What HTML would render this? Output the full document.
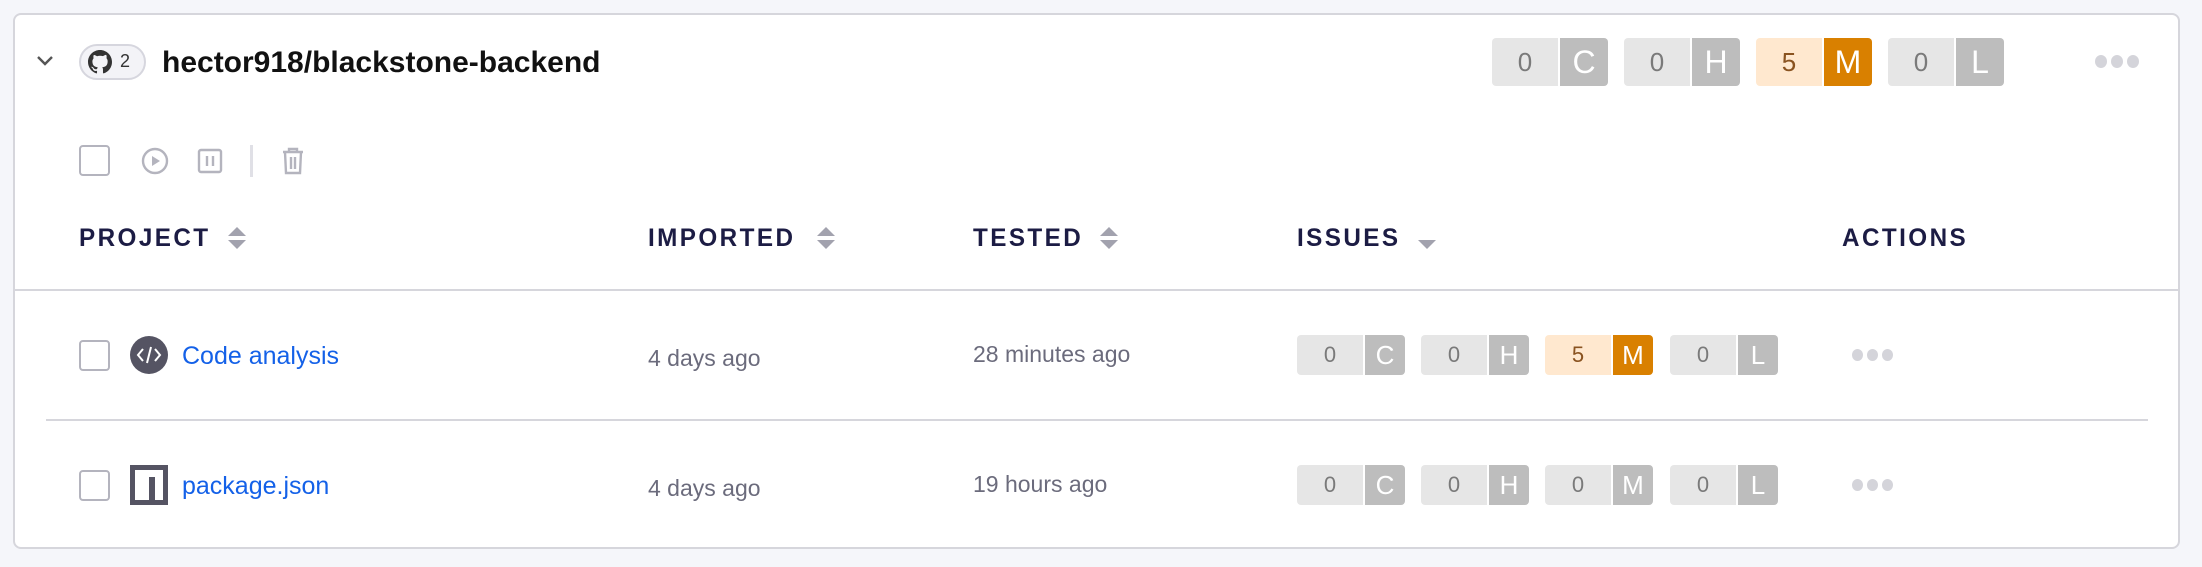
<!DOCTYPE html>
<html><head><meta charset="utf-8"><style>
*{box-sizing:border-box;margin:0;padding:0}
body{width:2202px;height:567px;background:#f5f6fa;font-family:"Liberation Sans",sans-serif;position:relative;overflow:hidden}
.card{position:absolute;left:13px;top:13px;width:2167px;height:536px;background:#fff;border:2px solid #d6d6dc;border-radius:8px}
.a{position:absolute}
.th{position:absolute;top:224px;font-size:25px;letter-spacing:2.5px;color:#1c1c44;font-weight:bold;transform:scaleX(0.97);transform-origin:left}
.sort{position:absolute;width:0;height:0;border-left:9px solid transparent;border-right:9px solid transparent}
.cb{position:absolute;width:31px;height:31px;border:2px solid #b4b4be;border-radius:4px;background:#fff}
.b{position:absolute;display:flex;border-radius:4px;overflow:hidden}
.b span{display:flex;align-items:center;justify-content:center;color:#fff}
.b .n{background:#e6e6e6;color:#7a7a7a;margin-right:2px}
.b .l{background:#bdbdbd}
.b.m .n{background:#ffe8cf;color:#8a5320}
.b.m .l{background:#d98000}
.hb{height:48px;font-size:26px}.hb .n{width:66px}.hb .l{width:48px;font-size:32px}
.rb{height:40px;font-size:22px}.rb .n{width:66px}.rb .l{width:40px;font-size:26px}
.dots{position:absolute;display:flex;gap:4px}
.dots i{display:block;border-radius:50%;background:#d4d4da}
.link{position:absolute;font-size:25px;color:#1461e8}
.date{position:absolute;font-size:23px;color:#6b6b7c}
</style></head><body>
<div class="card"></div>
<svg class="a" style="left:36px;top:54px" width="18" height="14" viewBox="0 0 18 14"><path d="M2 3l7 7 7-7" fill="none" stroke="#555" stroke-width="2.4"/></svg>
<div class="a" style="left:79px;top:44px;width:67px;height:36px;border:2px solid #d6d6de;border-radius:18px;background:#f3f3f7"></div>
<svg class="a" style="left:88px;top:50px" width="24" height="24" viewBox="0 0 16 16"><path fill="#333" d="M8 0C3.58 0 0 3.58 0 8c0 3.54 2.29 6.53 5.470 7.59.4.07.55-.17.55-.38v-1.34C3.8 14.35 3.33 12.8 3.33 12.8c-.36-.92-.89-1.170-.89-1.17-.73-.5.06-.49.06-.49.8.06 1.23.83 1.23.83.71 1.22 1.87.87 2.33.66.07-.52.28-.87.51-1.07-1.78-.2-3.64-.89-3.64-3.95 0-.87.31-1.59.82-2.15-.08-.2-.36-1.02.08-2.12 0 0 .67-.21 2.2.82A7.6 7.6 0 018 3.85c.68 0 1.36.09 2 .27 1.53-1.04 2.2-.82 2.2-.82.44 1.1.16 1.92.08 2.12.51.56.82 1.27.82 2.15 0 3.07-1.87 3.75-3.65 3.95.29.25.54.73.54 1.48v2.2c0 .21.15.46.55.38A8 8 0 0016 8c0-4.42-3.58-8-8-8z"/></svg>
<div class="a" style="left:120px;top:51px;font-size:18px;color:#333">2</div>
<div class="a" style="left:162px;top:46px;font-size:30px;color:#111;font-weight:bold">hector918/blackstone-backend</div>
<div class="b hb" style="left:1492px;top:38px"><span class="n">0</span><span class="l">C</span></div>
<div class="b hb" style="left:1624px;top:38px"><span class="n">0</span><span class="l">H</span></div>
<div class="b hb m" style="left:1756px;top:38px"><span class="n">5</span><span class="l">M</span></div>
<div class="b hb" style="left:1888px;top:38px"><span class="n">0</span><span class="l">L</span></div>
<div class="dots" style="left:2095px;top:55px"><i style="width:12px;height:13px"></i><i style="width:12px;height:13px"></i><i style="width:12px;height:13px"></i></div>
<div class="cb" style="left:79px;top:145px"></div>
<svg class="a" style="left:140px;top:146px" width="30" height="30" viewBox="0 0 30 30"><circle cx="15" cy="15" r="12" fill="none" stroke="#b4b4be" stroke-width="2.4"/><path d="M12 10v10l8-5z" fill="#b4b4be"/></svg>
<svg class="a" style="left:197px;top:148px" width="26" height="26" viewBox="0 0 26 26"><rect x="2" y="2" width="22" height="22" rx="2" fill="none" stroke="#b4b4be" stroke-width="2.4"/><path d="M10 8v10M16 8v10" stroke="#b4b4be" stroke-width="2.4"/></svg>
<div class="a" style="left:250px;top:145px;width:3px;height:32px;background:#e0e0e6"></div>
<svg class="a" style="left:281px;top:147px" width="24" height="28" viewBox="0 0 24 28"><path d="M2 5h20M8 5V2h8v3M4 5l1 21h14l1-21M10 10v12M14 10v12" fill="none" stroke="#b4b4be" stroke-width="2.4"/></svg>
<div class="th" style="left:79px">PROJECT</div>
<div class="sort" style="left:228px;top:227px;border-bottom:9px solid #a2a2ae"></div><div class="sort" style="left:228px;top:240px;border-top:9px solid #a2a2ae"></div>
<div class="th" style="left:648px">IMPORTED</div>
<div class="sort" style="left:817px;top:227px;border-bottom:9px solid #a2a2ae"></div><div class="sort" style="left:817px;top:240px;border-top:9px solid #a2a2ae"></div>
<div class="th" style="left:973px">TESTED</div>
<div class="sort" style="left:1100px;top:227px;border-bottom:9px solid #a2a2ae"></div><div class="sort" style="left:1100px;top:240px;border-top:9px solid #a2a2ae"></div>
<div class="th" style="left:1297px">ISSUES</div>
<div class="sort" style="left:1418px;top:240px;border-top:9px solid #a2a2ae"></div>
<div class="th" style="left:1842px">ACTIONS</div>
<div class="a" style="left:13px;top:289px;width:2167px;height:2px;background:#d6d6dc"></div>
<div class="cb" style="left:79px;top:340px"></div>
<svg class="a" style="left:130px;top:336px" width="38" height="38" viewBox="0 0 38 38"><circle cx="19" cy="19" r="19" fill="#555463"/><path d="M13 13l-5 6 5 6M25 13l5 6-5 6M21 11l-4 16" fill="none" stroke="#fff" stroke-width="2"/></svg>
<div class="link" style="left:182px;top:342px">Code analysis</div>
<div class="date" style="left:648px;top:345px">4 days ago</div>
<div class="date" style="left:973px;top:341px">28 minutes ago</div>
<div class="b rb" style="left:1297px;top:335px"><span class="n">0</span><span class="l">C</span></div>
<div class="b rb" style="left:1421px;top:335px"><span class="n">0</span><span class="l">H</span></div>
<div class="b rb m" style="left:1545px;top:335px"><span class="n">5</span><span class="l">M</span></div>
<div class="b rb" style="left:1670px;top:335px"><span class="n">0</span><span class="l">L</span></div>
<div class="dots" style="left:1852px;top:349px"><i style="width:11px;height:12px"></i><i style="width:11px;height:12px"></i><i style="width:11px;height:12px"></i></div>
<div class="a" style="left:46px;top:419px;width:2102px;height:2px;background:#d6d6dc"></div>
<div class="cb" style="left:79px;top:470px"></div>
<svg class="a" style="left:130px;top:465px" width="38" height="40" viewBox="0 0 38 40"><rect width="38" height="40" fill="#555463"/><path d="M5 35V5h28v30h-8V12h-6v23z" fill="#fff"/></svg>
<div class="link" style="left:182px;top:472px">package.json</div>
<div class="date" style="left:648px;top:475px">4 days ago</div>
<div class="date" style="left:973px;top:471px">19 hours ago</div>
<div class="b rb" style="left:1297px;top:465px"><span class="n">0</span><span class="l">C</span></div>
<div class="b rb" style="left:1421px;top:465px"><span class="n">0</span><span class="l">H</span></div>
<div class="b rb" style="left:1545px;top:465px"><span class="n">0</span><span class="l">M</span></div>
<div class="b rb" style="left:1670px;top:465px"><span class="n">0</span><span class="l">L</span></div>
<div class="dots" style="left:1852px;top:479px"><i style="width:11px;height:12px"></i><i style="width:11px;height:12px"></i><i style="width:11px;height:12px"></i></div>
</body></html>
